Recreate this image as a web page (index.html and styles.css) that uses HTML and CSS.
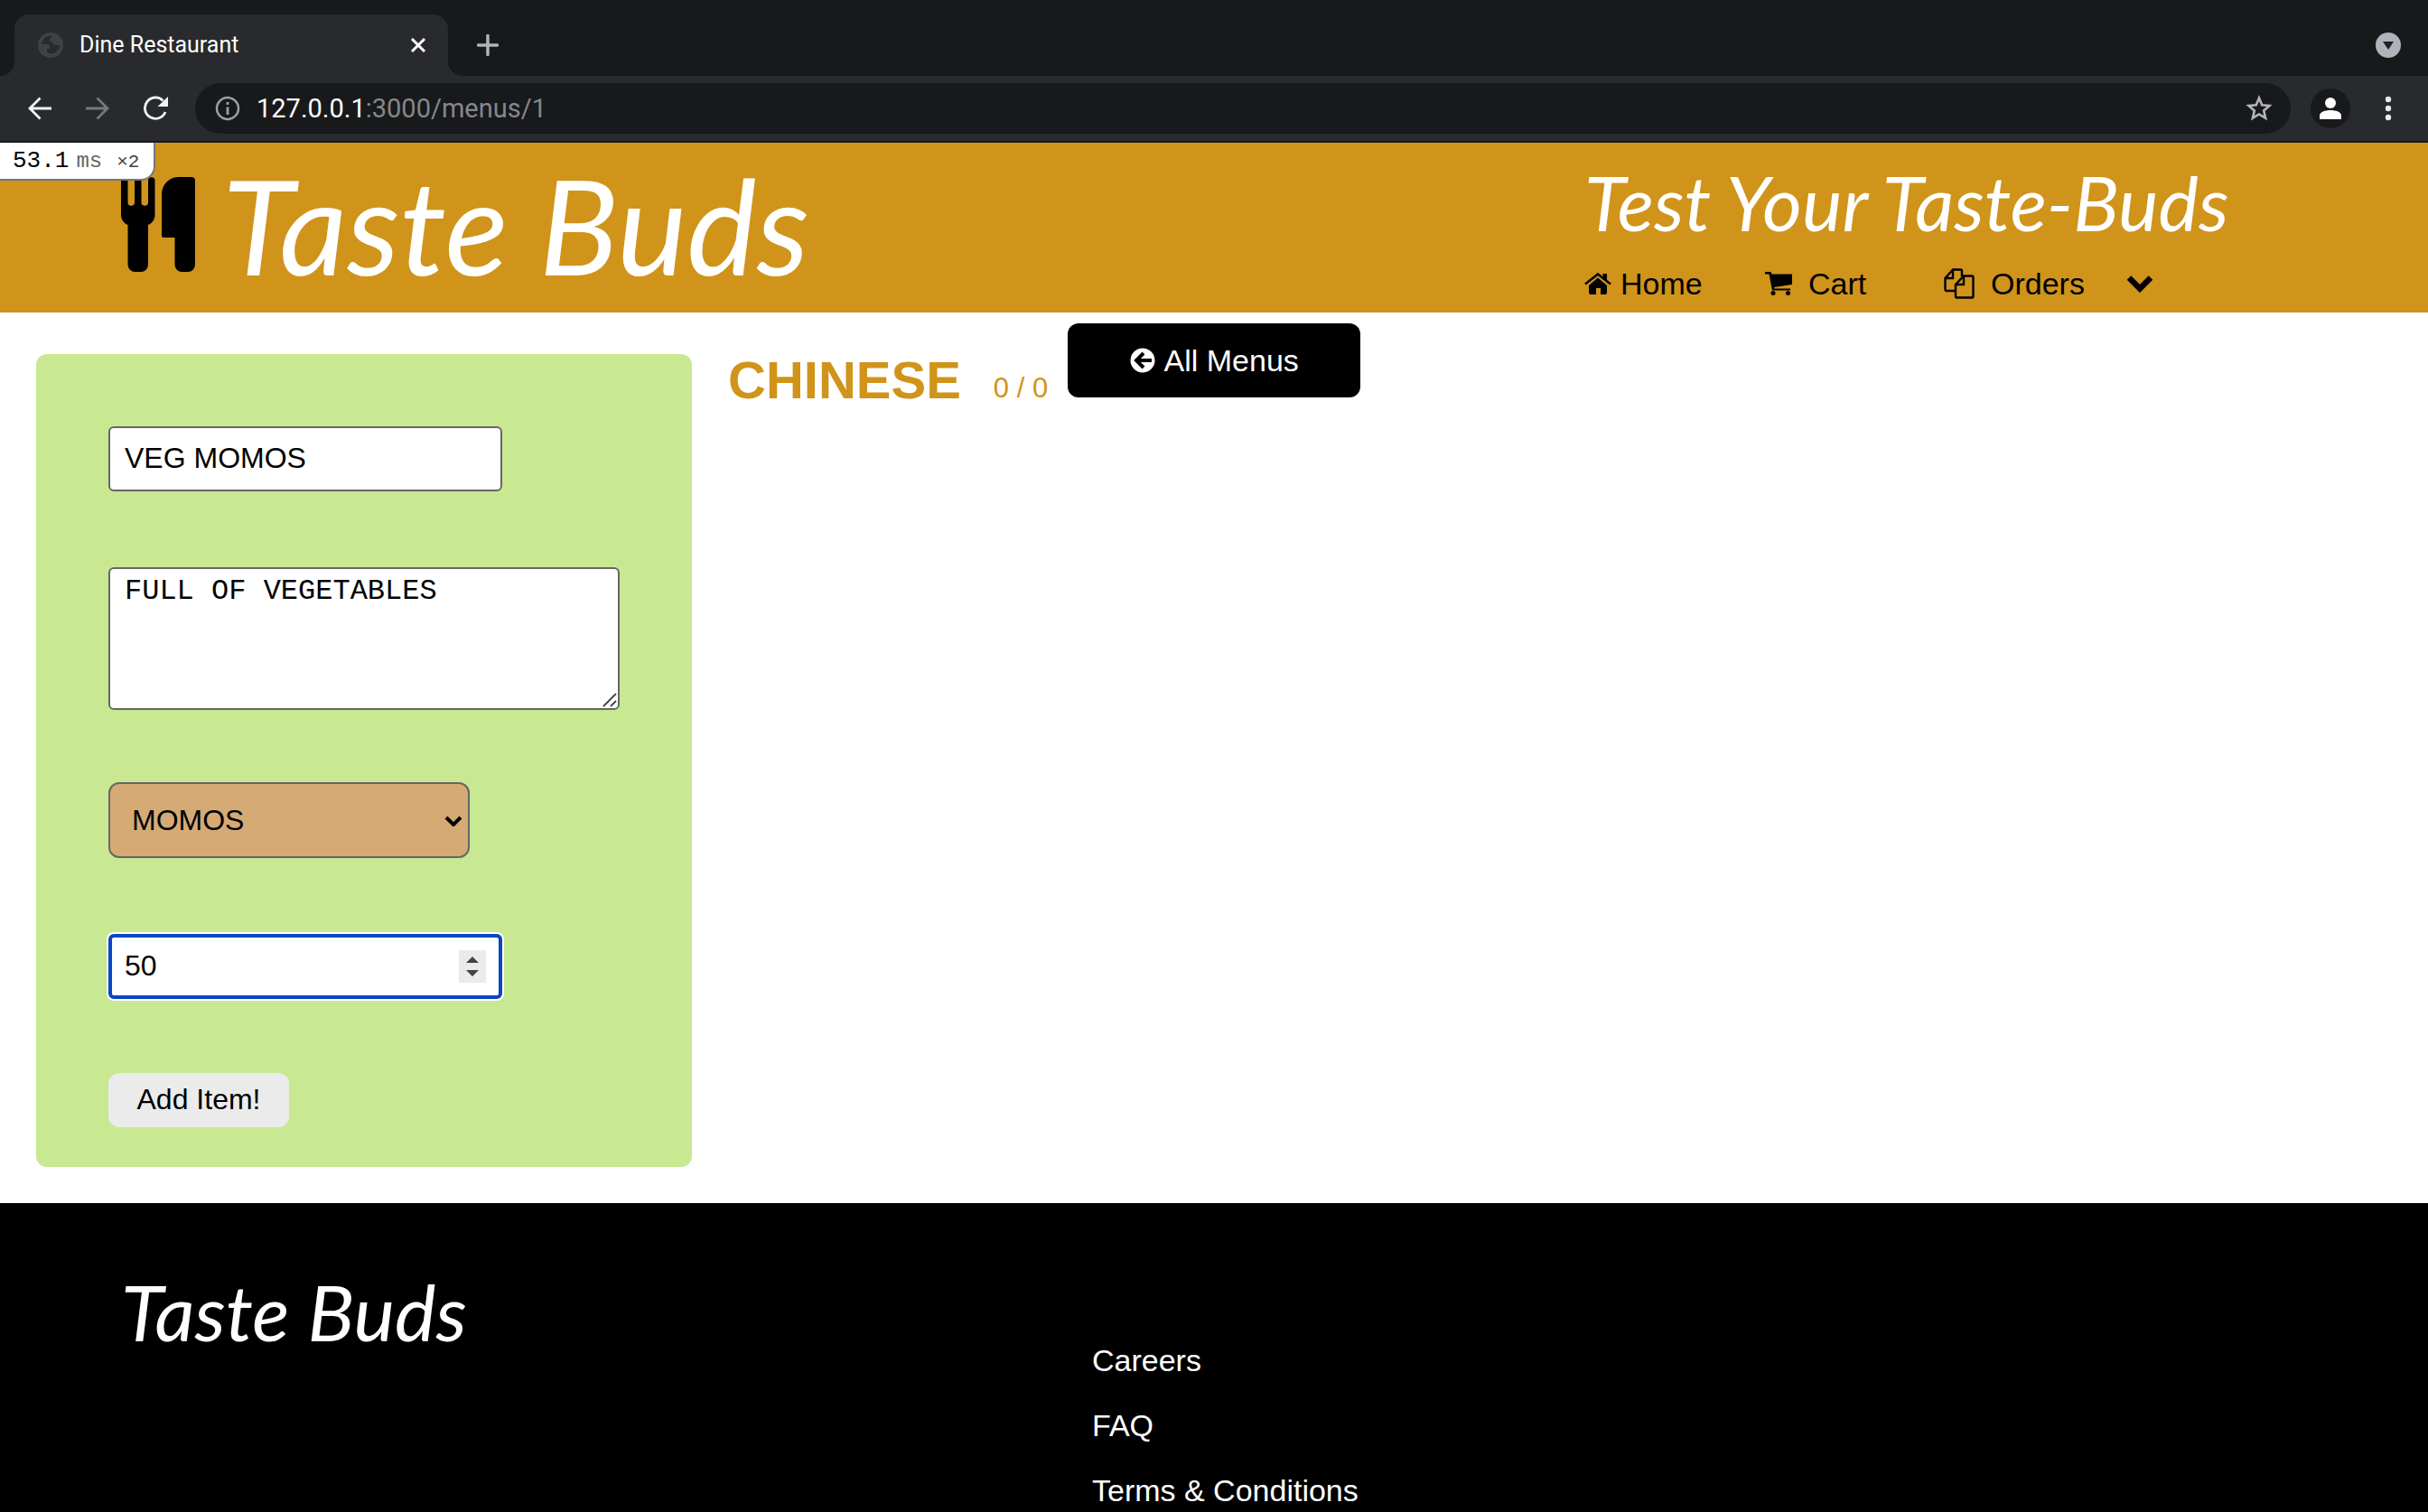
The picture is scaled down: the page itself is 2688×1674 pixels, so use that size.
FILE: index.html
```html
<!DOCTYPE html>
<html lang="en">
<head>
<meta charset="utf-8">
<title>Dine Restaurant</title>
<link rel="stylesheet" href="styles.css">
</head>
<body>
<div class="tabs">
  <div class="tab">
    <svg class="favicon" viewBox="0 0 28 28"><circle cx="14" cy="14" r="14" fill="#3f4144"/><path d="M15 4c-6-1-10 3-11 9h5c3 0 5 2 4 5h-3v4c3 2 8 2 11-1 2-2 3-4 3-7h-4c-3 0-4-2-4-4h-3c-1-3 0-4 3-4z" fill="#292a2d"/></svg>
    <span class="tab-title">Dine Restaurant</span>
    <button class="icon-button" aria-label="Close tab"><svg width="18" height="18" viewBox="0 0 18 18"><path d="M2 2l14 14M16 2L2 16" stroke="#fff" stroke-width="3"/></svg></button>
  </div>
  <button class="icon-button new-tab" aria-label="New tab"><svg width="24" height="24" viewBox="0 0 24 24"><path d="M12 1.500v21M1.500 12h21" stroke="#b0b3ba" stroke-width="3.500" stroke-linecap="round"/></svg></button>
  <button class="icon-button tab-search" aria-label="Search tabs"><svg width="28" height="28" viewBox="0 0 28 28"><circle cx="14" cy="14" r="14" fill="#b0b3ba"/><path d="M8 10h12l-6 9z" fill="#202124"/></svg></button>
</div>
<div class="toolbar">
  <div class="history">
    <button class="icon-button" aria-label="Back"><svg width="28" height="28" viewBox="0 0 28 28"><path d="M27 14H3M14.500 2.500L3 14l11.500 11.500" fill="none" stroke="#f1f3f4" stroke-width="2.800"/></svg></button>
    <button class="icon-button" aria-label="Forward"><svg width="28" height="28" viewBox="0 0 28 28"><path d="M1 14h24M13.500 2.500L25 14 13.500 25.500" fill="none" stroke="#77787b" stroke-width="2.800"/></svg></button>
    <button class="icon-button" aria-label="Reload"><svg width="28" height="28" viewBox="0 0 28 28"><path d="M25 18A11.700 11.700 0 1 1 22.500 5.500" fill="none" stroke="#f1f3f4" stroke-width="2.800"/><path d="M28 1v11H16.500z" fill="#f1f3f4"/></svg></button>
  </div>
  <div class="omnibox">
    <svg width="28" height="28" viewBox="0 0 28 28"><circle cx="14" cy="14" r="12" fill="none" stroke="#9aa0a6" stroke-width="2.500"/><path d="M14 12.500V21M14 7v3" stroke="#9aa0a6" stroke-width="2.800"/></svg>
    <span class="url"><span class="host">127.0.0.1</span>:3000/menus/1</span>
    <button class="icon-button" aria-label="Bookmark"><svg width="30" height="30" viewBox="0 0 30 30"><path d="M15 3.500l3.200 7.800 8.300.7-6.300 5.500 1.900 8.200-7.100-4.300-7.100 4.300 1.900-8.200L3.500 12l8.300-.7z" fill="none" stroke="#b4b5b7" stroke-width="2.600"/></svg></button>
  </div>
  <button class="icon-button" aria-label="Profile"><svg width="44" height="44" viewBox="0 0 44 44"><circle cx="22" cy="22" r="22" fill="#18191b"/><circle cx="22" cy="16" r="6" fill="#fff"/><path d="M10 34v-4c0-4 6-6 12-6s12 2 12 6v4z" fill="#fff"/></svg></button>
  <button class="icon-button menu-dots" aria-label="Menu"><svg width="8" height="28" viewBox="0 0 8 28"><g fill="#e8eaed"><circle cx="4" cy="4" r="3.200"/><circle cx="4" cy="14" r="3.200"/><circle cx="4" cy="24" r="3.200"/></g></svg></button>
</div>

<div class="page">
  <div class="profiler"><span>53.1</span><span class="unit">ms</span><span class="count">×2</span></div>
  <header class="header">
    <a class="brand" href="#">
      <svg width="82" height="106" viewBox="0 0 82 106"><path d="M0 4a4 4 0 0 1 7.500 0v24a3.700 3.700 0 0 0 7.500 0V4a3.700 3.700 0 0 1 7.500 0v24a3.700 3.700 0 0 0 7.500 0V4a3.700 3.700 0 0 1 7.500 0v38c0 5-3 9-7.500 11v44a8 8 0 0 1-8 8h-6.500a8 8 0 0 1-8-8V53C3 51 0 47 0 42zM82 4v93a8 8 0 0 1-8 8h-6.500a8 8 0 0 1-8-8V67H47a2 2 0 0 1-2-2V19C45 9 53 0 63 0h15a4 4 0 0 1 4 4z"/></svg>
      <span class="logo">Taste Buds</span>
    </a>
    <div class="header-side">
      <p class="tagline">Test Your Taste-Buds</p>
      <nav class="nav">
        <a href="#" class="nav-home"><svg width="30" height="24" viewBox="0 0 30 24"><path d="M15 5.500l10 8.500v8a2 2 0 0 1-2 2h-5v-7h-5v7H7a2 2 0 0 1-2-2v-8z"/><path d="M1 12.500L15 1.500l14 11" fill="none" stroke="#000" stroke-width="2.600"/><path d="M20.500 1H25v9l-4.500-4z"/></svg>Home</a>
        <a href="#" class="nav-cart"><svg width="30" height="26" viewBox="0 0 30 26"><path d="M0 0h6.500l1 2.500H30V14L10 17l.5 1.500H28v2H8L4.500 2.500H0z"/><circle cx="9" cy="23.500" r="2.500"/><circle cx="25.500" cy="23.500" r="2.500"/></svg>Cart</a>
        <a href="#" class="nav-orders"><svg width="34" height="34" viewBox="0 0 34 34"><path d="M12 25H3a1.500 1.500 0 0 1-1.500-1.500V11L10 1.500h8.500A1.500 1.500 0 0 1 20 3v6M10 2v9H2M22 8.500h9a1.500 1.500 0 0 1 1.500 1.500v21a1.500 1.500 0 0 1-1.500 1.500H14.500A1.500 1.500 0 0 1 13 31V18zM22 9v9h-9" fill="none" stroke="#000" stroke-width="2.400"/></svg>Orders</a>
        <button class="icon-button" aria-label="More"><svg width="30" height="20" viewBox="0 0 30 20"><path d="M3 3.500l12 12 12-12" fill="none" stroke="#000" stroke-width="6.500"/></svg></button>
      </nav>
    </div>
  </header>

  <main class="main">
    <form class="item-form">
      <input class="field" type="text" value="VEG MOMOS" aria-label="Item name">
      <div class="description-wrap">
        <textarea class="field description" aria-label="Description">FULL OF VEGETABLES</textarea>
        <svg class="grip" width="16" height="16" viewBox="0 0 16 16"><path d="M1 15L15 1M9 15l6-6" stroke="#444" stroke-width="1.800"/></svg>
      </div>
      <div class="select-wrap">
        <select class="category" aria-label="Category"><option>MOMOS</option></select>
        <svg class="arrow" width="20" height="12" viewBox="0 0 20 12"><path d="M2 2l8 8 8-8" fill="none" stroke="#000" stroke-width="4"/></svg>
      </div>
      <div class="price">
        <input class="field price-input" type="number" value="50" aria-label="Price">
        <svg class="stepper" width="30" height="36" viewBox="0 0 30 36"><rect width="30" height="36" rx="1" fill="#ebebeb"/><path d="M8 14l7-7 7 7zM8 22l7 7 7-7z" fill="#444"/></svg>
      </div>
      <button class="add" type="button">Add Item!</button>
    </form>
    <section class="menu-head">
      <h1 class="title">CHINESE</h1>
      <span class="counter">0 / 0</span>
      <a class="all-menus" href="#"><svg width="28" height="28" viewBox="0 0 28 28"><circle cx="14" cy="14" r="13.500" fill="#fff"/><path d="M24 14H8M15 6l-8 8 8 8" fill="none" stroke="#000" stroke-width="4"/></svg>All Menus</a>
    </section>
  </main>

  <footer class="footer">
    <span class="footer-logo">Taste Buds</span>
    <nav class="footer-links"><a href="#">Careers</a><a href="#">FAQ</a><a href="#">Terms &amp; Conditions</a></nav>
  </footer>
</div>
</body>
</html>
```
FILE: styles.css
```css
* { box-sizing: border-box; }
html { height: 100%; }
body {
  margin: 0;
  height: 100%;
  display: flex;
  flex-direction: column;
  overflow: hidden;
  font-family: "Liberation Sans", Arial, sans-serif;
  font-size: 34px;
  line-height: 40px;
  color: #000;
  background: #fff;
}
a { color: inherit; text-decoration: none; }
svg { display: block; flex: none; }
.icon-button {
  display: flex;
  flex: none;
  padding: 0;
  border: 0;
  background: none;
}

/* Browser frame */
.tabs {
  display: flex;
  flex: none;
  align-items: center;
  height: 84px;
  padding: 16px 30px 0 16px;
  background: #18191b;
  font-family: Roboto, sans-serif;
}
.tab {
  position: relative;
  display: flex;
  align-items: center;
  width: 480px;
  height: 68px;
  padding: 0 24px 0 26px;
  border-radius: 16px 16px 0 0;
  background: #292a2d;
}
.tab::before, .tab::after {
  content: "";
  position: absolute;
  bottom: 0;
  width: 16px;
  height: 16px;
}
.tab::before { left: -16px; background: radial-gradient(circle at 0 0, #18191b 16px, #292a2d 16px); }
.tab::after { right: -16px; background: radial-gradient(circle at 100% 0, #18191b 16px, #292a2d 16px); }
.favicon { width: 28px; height: 28px; }
.tab-title { flex: 1; margin-left: 18px; color: #fff; font-size: 25px; }
.new-tab { margin-left: 32px; }
.tab-search { margin-left: auto; }
.toolbar {
  display: flex;
  flex: none;
  align-items: center;
  height: 74px;
  padding: 0 40px 0 30px;
  border-bottom: 2px solid #18191b;
  background: #292a2d;
  font-family: Roboto, sans-serif;
}
.history { display: flex; gap: 36px; }
.omnibox {
  display: flex;
  flex: 1;
  align-items: center;
  height: 56px;
  margin: 0 22px 0 30px;
  padding: 0 20px 0 22px;
  border-radius: 28px;
  background: #18191b;
}
.url { flex: 1; margin-left: 18px; font-size: 29px; color: #85878a; }
.host { color: #fff; }
.menu-dots { margin-left: 38px; }

/* Site header */
.page {
  position: relative;
  display: flex;
  flex: 1;
  flex-direction: column;
  min-height: 0;
}
.profiler {
  position: absolute;
  top: 0;
  left: 0;
  display: flex;
  align-items: baseline;
  height: 42px;
  padding: 0 16px 0 14px;
  border: solid #777;
  border-width: 0 2px 2px 0;
  border-radius: 0 0 16px 0;
  background: #fff;
  font-family: "Liberation Mono", monospace;
  font-size: 26px;
}
.unit { margin-left: 8px; font-size: 24px; color: #666; }
.count { margin-left: 16px; font-size: 21px; color: #444; }
.header {
  display: flex;
  flex: none;
  justify-content: space-between;
  height: 188px;
  padding: 0 226px 0 134px;
  background: #d0941b;
}
.brand { display: flex; align-items: center; gap: 30px; padding-bottom: 6px; color: #000; }
.logo, .tagline, .footer-logo {
  font-family: Lato, sans-serif;
  font-style: italic;
  color: #fff;
}
.logo { font-size: 146px; line-height: 160px; }
.header-side { width: 708px; }
.tagline { margin: 0; padding-top: 16px; font-size: 84px; line-height: 100px; white-space: nowrap; }
.nav { display: flex; align-items: center; padding-top: 20px; }
.nav a { display: flex; align-items: center; }
.nav-home { gap: 10px; width: 200px; }
.nav-cart { gap: 18px; width: 198px; }
.nav-orders { gap: 18px; width: 202px; }

/* Menu page */
.main { display: flex; flex: none; align-items: flex-start; padding: 0 40px 40px; }
.item-form {
  display: flex;
  flex: none;
  flex-direction: column;
  align-items: flex-start;
  width: 726px;
  margin-top: 46px;
  padding: 80px 80px 44px;
  border-radius: 12px;
  background: #c8e891;
}
.field {
  display: block;
  width: 436px;
  height: 72px;
  padding: 0 16px 2px;
  border: 2px solid #666;
  border-radius: 6px;
  outline: 0;
  background: #fff;
  font: 32px "Liberation Sans", Arial, sans-serif;
  color: #000;
}
.description-wrap { position: relative; margin: 84px 0 80px; }
.description {
  width: 566px;
  height: 158px;
  padding: 6px 16px;
  resize: none;
  font-family: "Liberation Mono", "Courier New", monospace;
}
.grip { position: absolute; right: 3px; bottom: 3px; pointer-events: none; }
.select-wrap, .price { position: relative; }
.category {
  display: block;
  width: 400px;
  height: 84px;
  padding: 0 24px;
  appearance: none;
  border: 2px solid #666;
  border-radius: 12px;
  background: #d5aa75;
  font: 32px "Liberation Sans", Arial, sans-serif;
  color: #000;
}
.arrow { position: absolute; right: 8px; top: 37px; pointer-events: none; }
.price { margin: 84px 0 82px; }
.price-input {
  padding: 0 14px 2px;
  border: 4px solid #0a47c2;
  box-shadow: 0 0 0 2px #fff;
  appearance: textfield;
}
.price-input::-webkit-inner-spin-button { appearance: none; }
.stepper { position: absolute; right: 18px; top: 18px; }
.add {
  width: 200px;
  height: 60px;
  padding: 0 0 2px;
  border: 0;
  border-radius: 12px;
  background: #ebebeb;
  font: 32px "Liberation Sans", Arial, sans-serif;
  color: #000;
}
.menu-head { display: flex; align-items: flex-end; margin: 12px 0 0 40px; color: #d0941b; }
.title { margin: 0; font-size: 58px; line-height: 58px; margin-bottom: -10px; }
.counter { margin: 0 22px -10px 36px; font-size: 31px; }
.all-menus {
  display: flex;
  align-items: center;
  justify-content: center;
  gap: 10px;
  width: 324px;
  height: 82px;
  border-radius: 12px;
  background: #000;
  color: #fff;
}

/* Footer */
.footer {
  display: flex;
  flex: 1;
  min-height: 0;
  padding: 80px 134px 0;
  background: #000;
  color: #fff;
}
.footer-logo { width: 1075px; font-size: 86px; line-height: 80px; }
.footer-links { display: flex; flex-direction: column; gap: 32px; padding-top: 74px; white-space: nowrap; }
```
